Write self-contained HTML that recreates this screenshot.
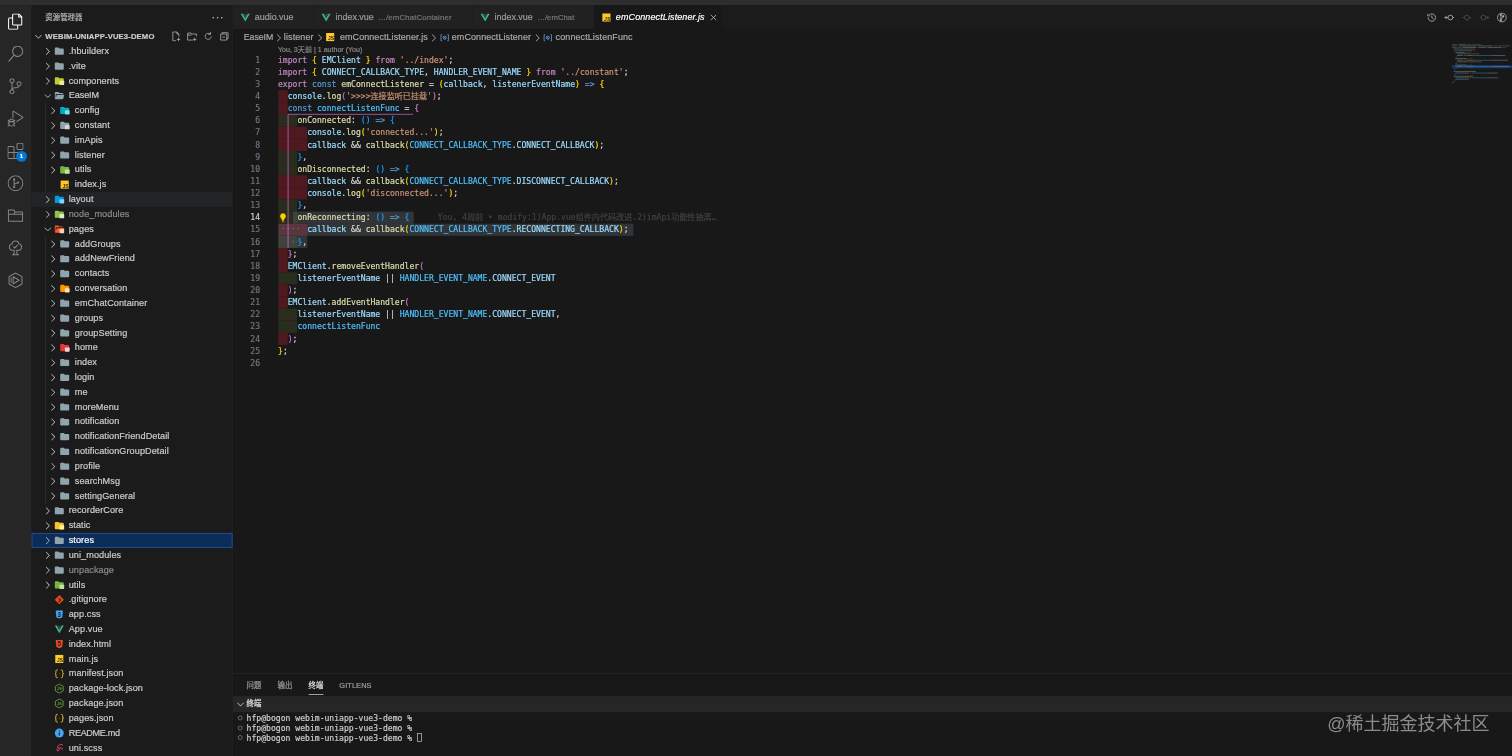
<!DOCTYPE html>
<html lang="zh-CN">
<head>
<meta charset="utf-8">
<title>emConnectListener.js — webim-uniapp-vue3-demo</title>
<style>
html,body{margin:0;padding:0;background:#181818;overflow:hidden;width:1512px;height:756px}
body{will-change:transform}
#root{position:absolute;left:0;top:0;width:2244px;height:1122px;transform:scale(0.673797);transform-origin:0 0;background:#181818;
 font-family:"Liberation Sans","Noto Sans CJK SC",sans-serif;font-size:13px;color:#cccccc;overflow:hidden;-webkit-text-stroke:0.28px currentColor}
#root *{box-sizing:border-box}
.titlebar{position:absolute;left:0;top:0;width:100%;height:8.2px;background:#2e2e2e}
.abar{position:absolute;left:0;top:8.2px;width:47.3px;bottom:0;background:#262626}
.abar .it{position:relative;width:48px;height:48px;display:flex;align-items:center;justify-content:center;padding-right:2.8px}
.abar svg{width:24px;height:24px;fill:#868686}
.abar .it.on svg{fill:#ffffff}
.abar .st{fill:none!important;stroke:#868686;stroke-width:1.5}
.badge{position:absolute;left:24px;top:24px;width:16px;height:16px;border-radius:8px;background:#0078d4;color:#fff;font-size:9px;font-weight:700;text-align:center;line-height:16px}
.side{position:absolute;left:47.3px;top:8.2px;width:298.7px;bottom:0;background:#1b1b1b;border-right:1px solid #242424}
.side .hd{height:35px;line-height:35px;padding-left:20px;font-size:11px;color:#bbbbbb;position:relative}
.side .hd .more{position:absolute;right:12px;top:2.6px;font-size:16px;letter-spacing:1px;color:#bbb;line-height:30px}
.pane{height:22.3px;line-height:22px;font-size:11.4px;font-weight:700;color:#cccccc;position:relative;padding-left:20px;letter-spacing:0.2px}
.pane .tw{position:absolute;left:2px;top:3px}
.pane .acts{position:absolute;right:4px;top:3px;display:flex;gap:8px}
.pane .acts svg{width:16px;height:16px;fill:none;stroke:#c5c5c5;stroke-width:1}
.row{height:22px;line-height:22px;display:flex;align-items:center;position:relative;white-space:nowrap;color:#cccccc}
.row.dim{color:#8c8c8c}
.row.sel{background:#0c2c5a;outline:1.3px solid #2b5ca8;outline-offset:-1px;color:#fff}
.row.hov{background:#232426}
.row.l2 .lb{margin-left:1px}
.row .tw{margin-left:-0.8px;margin-right:0.8px}
.tw{width:16px;height:16px;flex:0 0 16px;display:inline-block}
.ic{width:16px;height:16px;flex:0 0 16px;margin-right:6px;display:inline-block}
.lb{font-size:13.5px;letter-spacing:0.13px}
.gd{position:absolute;left:19.5px;top:0;width:1px;height:22px;background:#353535}
.ed{position:absolute;left:346px;top:8.2px;right:0;bottom:0;background:#181818}
.tabs{height:35px;background:#1b1b1b;display:flex;position:relative}
.tab{height:35px;display:flex;align-items:center;padding-left:10px;background:#212121;border-right:1px solid #1d1d1d;color:#9d9d9d;white-space:nowrap;font-size:13.2px;letter-spacing:0.1px}
.tab .ic{margin-right:6px}
.tab .ds{font-size:11.500px;color:#777;margin-left:6.5px;position:relative;top:0.5px}
.tab.on{background:#181818;color:#ffffff;font-style:italic}
.tab .x{width:16px;height:16px;margin-left:5.5px}
.tacts{position:absolute;right:7px;top:9.500px;display:flex;gap:10px}
.tacts svg{width:16px;height:16px;fill:none;stroke:#c5c5c5;stroke-width:1.1}
.tacts svg.off{stroke:#555}
.bc{height:22px;line-height:22px;position:relative;top:2.2px;color:#a9a9a9;font-size:13px;white-space:nowrap}
.ab{position:absolute;top:0}
.bc .sep{width:16px;height:16px;top:3px}
.bc .ic{margin:0;display:block}
.bc .sy{width:16px;height:16px;top:3px}
.lens{height:14.800px;line-height:16px;padding-left:66.600px;font-size:10.500px;color:#8a8a8a;white-space:nowrap}
.code{position:relative;font-family:"DejaVu Sans Mono","Liberation Mono","Noto Sans CJK SC",monospace;font-size:12px}
.ln{height:18px;line-height:18px;position:relative;white-space:pre}
.no{position:absolute;left:0;width:40px;text-align:right;color:#6e7681}
.no.cur{color:#cccccc}
.tx{position:absolute;left:66.600px;top:0;height:18px}
.src{position:relative}
.ir{position:absolute;left:0;top:0;height:18px}
.sl{position:absolute;top:0;height:18px;background:rgba(120,130,140,0.28)}
.ws{position:absolute;top:0;color:rgba(220,220,220,0.25)}
.blame{color:#404040;margin-left:42px;position:relative}
.bulb{position:absolute;left:66px;top:1px;width:16px;height:16px;z-index:5}
.k{color:#569cd6}.p{color:#c586c0}.v{color:#9cdcfe}.f{color:#dcdcaa}.c{color:#4fc1ff}.s{color:#ce9178}.d{color:#d4d4d4}
.b1{color:#ffd700}.b2{color:#da70d6}.b3{color:#179fff}
.bg-h{position:absolute;height:1px;background:#da70d6}
.bg-v{position:absolute;width:1px;background:#da70d6}
.mini{position:absolute;right:0;top:57px;width:89.300px;height:70px}
.panel{position:absolute;left:346px;right:0;top:999px;bottom:0;background:#181818;border-top:1px solid #2b2b2b}
.ptabs{height:33.4px;display:flex;align-items:center;padding-left:10px;letter-spacing:0.1px;font-size:11px;color:#9d9d9d}
.ptabs span{margin:0 13.7px 0 10px;height:35px;line-height:35px;top:0.8px;position:relative}
.ptabs span.on{color:#e7e7e7}
.ptabs span.on:after{content:"";position:absolute;left:0;right:0;bottom:4px;height:1px;background:#e7e7e7}
.phead{height:23.4px;line-height:23.4px;background:#262626;font-size:11px;font-weight:700;color:#cccccc;padding-left:20px;position:relative}
.phead .tw{position:absolute;left:3px;top:3.7px}
.term{font-family:"DejaVu Sans Mono","Liberation Mono","Noto Sans CJK SC",monospace;font-size:12px;color:#cccccc;padding:2px 0 0 20px;white-space:pre;position:relative}
.term div{height:14.800px;line-height:14.800px;position:relative}
.term i{position:absolute;left:-13px;top:3px;width:7px;height:7px;border:1px solid #8a8a8a;border-radius:50%}
.cursor{display:inline-block;width:7px;height:13px;border:1px solid #cccccc;vertical-align:-2px}
.wm{-webkit-text-stroke:0;position:absolute;right:33.5px;top:1054px;font-size:26.7px;color:#8c8c8c;font-family:"Liberation Sans","Noto Sans CJK SC",sans-serif;white-space:nowrap;line-height:40px}
</style>
</head>
<body>
<div id="root">
<div class="titlebar"></div>

<div class="abar">
 <div class="it on"><svg viewBox="0 0 24 24"><path d="M17.5 0h-9L7 1.5V6H2.5L1 7.5v15.070L2.500 24h12.070L16 22.570V18h4.700l1.300-1.430V4.500L17.500 0zm0 2.120l2.380 2.380H17.500V2.120zm-3 20.380h-12v-15H7v9.070L8.500 18h6v4.500zm6-6h-12v-15H16V6h4.500v10.500z"/></svg></div>
 <div class="it"><svg viewBox="0 0 24 24"><path d="M15.250 0a8.250 8.250 0 0 0-6.180 13.720L1 22.880l1.120 1 8.050-9.120A8.251 8.251 0 1 0 15.250.010V0zm0 15a6.750 6.750 0 1 1 0-13.500 6.750 6.750 0 0 1 0 13.500z"/></svg></div>
 <div class="it"><svg viewBox="0 0 24 24"><path d="M21.007 8.222A3.738 3.738 0 0 0 15.045 5.200a3.737 3.737 0 0 0 1.156 6.583 2.988 2.988 0 0 1-2.668 1.670h-2.990a4.456 4.456 0 0 0-2.989 1.165V7.400a3.737 3.737 0 1 0-1.494 0v9.117a3.776 3.776 0 1 0 1.816.099 2.990 2.990 0 0 1 2.668-1.667h2.990a4.484 4.484 0 0 0 4.223-3.039 3.736 3.736 0 0 0 3.250-3.687zM4.565 3.738a2.242 2.242 0 1 1 4.484 0 2.242 2.242 0 0 1-4.484 0zm4.484 16.441a2.242 2.242 0 1 1-4.484 0 2.242 2.242 0 0 1 4.484 0zm8.221-9.715a2.242 2.242 0 1 1 0-4.485 2.242 2.242 0 0 1 0 4.485z"/></svg></div>
 <div class="it"><svg viewBox="0 0 24 24"><path d="M10.940 13.500l-1.320 1.320a3.730 3.730 0 0 0-7.240 0L1.060 13.500 0 14.560l1.720 1.720-.220.220V18H0v1.500h1.500v.080c.077.489.214.966.410 1.420L0 22.940 1.060 24l1.650-1.650A4.308 4.308 0 0 0 6 24a4.310 4.310 0 0 0 3.290-1.650L10.940 24 12 22.940 10.090 21c.198-.464.336-.951.410-1.450v-.100H12V18h-1.500v-1.500l-.220-.220L12 14.560l-1.060-1.060zM6 13.500a2.250 2.250 0 0 1 2.250 2.250h-4.500A2.250 2.250 0 0 1 6 13.500zm3 6a3.330 3.330 0 0 1-3 3 3.330 3.330 0 0 1-3-3v-2.250h6v2.250zm14.760-9.900v1.260L13.500 17.370V15.600l8.500-5.370L9 2v9.460a5.070 5.070 0 0 0-1.500-.720V.630L8.640 0l15.120 9.600z"/></svg></div>
 <div class="it"><svg viewBox="0 0 24 24"><path d="M13.500 1.500L15 0h7.500L24 1.500V9l-1.500 1.500H15L13.500 9V1.500zm1.500 0V9h7.500V1.500H15zM0 15V6l1.500-1.500H9L10.500 6v7.500H18l1.500 1.500v7.500L18 24H1.500L0 22.500V15zm9-1.500V6H1.500v7.500H9zM9 15H1.500v7.500H9V15zm1.500 7.500H18V15h-7.500v7.500z"/></svg><span class="badge">1</span></div>
 <div class="it"><svg viewBox="0 0 24 24"><circle class="st" cx="12" cy="12" r="11"/><path class="st" d="M10 6.500v11M10 13.500l5.500-2.500"/><circle cx="10" cy="6.300" r="1.700"/><circle cx="10" cy="17.700" r="1.700"/><circle cx="15.800" cy="11" r="1.700"/></svg></div>
 <div class="it"><svg viewBox="0 0 24 24"><path class="st" stroke-linejoin="round" d="M1.500 20.500v-17h8l2 3h11v14z"/><path class="st" d="M1.500 10h21M11.500 6.500l-2 3.500"/></svg></div>
 <div class="it"><svg viewBox="0 0 24 24"><path class="st" d="M12 1.500c2.800 0 4.700 1.900 4.900 4.200 2.500.400 4.100 2.300 4.100 4.800 0 2.900-2.300 5-5.500 5h-1.500v4.500l2 2h-8l2-2v-4.500H8.500c-3.200 0-5.500-2.100-5.500-5 0-2.500 1.600-4.400 4.100-4.800.200-2.300 2.100-4.200 4.900-4.200z"/><path class="st" d="M8.500 9.500l2.500 2.500 4.500-4.500"/></svg></div>
 <div class="it"><svg viewBox="0 0 24 24"><path class="st" stroke-linejoin="round" d="M12 1.200l9.600 5.400v10.800L12 22.800l-9.600-5.400V6.600z"/><path class="st" stroke-linejoin="round" d="M8.500 6.800l9 5.200-9 5.200z"/><path class="st" d="M5.500 8.300v7.400"/></svg></div>
</div>

<div class="side">
 <div class="hd">资源管理器<span class="more">···</span></div>
 <div class="pane"><svg class="tw" viewBox="0 0 16 16"><path d="M7.976 10.072l4.357-4.357.62.618L8.284 11h-.618L3 6.333l.619-.618z" fill="#c5c5c5"/></svg>WEBIM-UNIAPP-VUE3-DEMO
  <div class="acts">
   <svg viewBox="0 0 16 16"><path d="M9.500 1.500h-6v13h5M9.500 1.500l3 3v4M9.500 1.500v3h3M12 10v5M9.500 12.500h5"/></svg>
   <svg viewBox="0 0 16 16"><path d="M14.500 8V4.500h-7l-1-1.500h-5v10.500h8M12 10v5M9.500 12.500h5M1.500 6h6"/></svg>
   <svg viewBox="0 0 16 16"><path d="M12.500 8a4.500 4.500 0 1 1-1.500-3.400M11.500 1.500v3.500h-3.500"/></svg>
   <svg viewBox="0 0 16 16"><path d="M4.500 4.500v-2h9v9h-2M2.500 4.500h9v9h-9zM5 9h4"/></svg>
  </div>
 </div>
<div class="row" style="padding-left:16.7px"><svg class="tw" viewBox="0 0 16 16"><path d="M5.700 13.700L5 13l4.600-4.600L5 3.700l.700-.700 5 5v.700z" fill="#c5c5c5"/></svg><svg class="ic" viewBox="0 0 24 24"><path d="M10 4H4c-1.11 0-2 .89-2 2v12c0 1.1.9 2 2 2h16c1.1 0 2-.9 2-2V8c0-1.11-.9-2-2-2h-8l-2-2z" fill="#90a4ae"/></svg><span class="lb">.hbuilderx</span></div>
<div class="row" style="padding-left:16.7px"><svg class="tw" viewBox="0 0 16 16"><path d="M5.700 13.700L5 13l4.600-4.600L5 3.700l.700-.700 5 5v.700z" fill="#c5c5c5"/></svg><svg class="ic" viewBox="0 0 24 24"><path d="M10 4H4c-1.11 0-2 .89-2 2v12c0 1.1.9 2 2 2h16c1.1 0 2-.9 2-2V8c0-1.11-.9-2-2-2h-8l-2-2z" fill="#90a4ae"/></svg><span class="lb">.vite</span></div>
<div class="row" style="padding-left:16.7px"><svg class="tw" viewBox="0 0 16 16"><path d="M5.700 13.700L5 13l4.600-4.600L5 3.700l.700-.700 5 5v.700z" fill="#c5c5c5"/></svg><svg class="ic" viewBox="0 0 24 24"><path d="M10 4H4c-1.11 0-2 .89-2 2v12c0 1.1.9 2 2 2h16c1.1 0 2-.9 2-2V8c0-1.11-.9-2-2-2h-8l-2-2z" fill="#c0ca33"/><rect x="12.5" y="11.5" width="10.5" height="9.5" rx="1.5" fill="#e6ee9c"/></svg><span class="lb">components</span></div>
<div class="row" style="padding-left:16.7px"><svg class="tw" viewBox="0 0 16 16"><path d="M7.976 10.072l4.357-4.357.62.618L8.284 11h-.618L3 6.333l.619-.618z" fill="#c5c5c5"/></svg><svg class="ic" viewBox="0 0 24 24"><path d="M19 20H4c-1.11 0-2-.9-2-2V6c0-1.11.89-2 2-2h6l2 2h7a2 2 0 0 1 2 2H4v10l2.14-8h17.07l-2.28 8.5c-.23.87-1.01 1.5-1.93 1.5z" fill="#90a4ae"/></svg><span class="lb" style="letter-spacing:-0.128px">EaseIM</span></div>
<div class="row l2" style="padding-left:24.7px"><i class="gd"></i><svg class="tw" viewBox="0 0 16 16"><path d="M5.700 13.700L5 13l4.600-4.600L5 3.700l.700-.700 5 5v.700z" fill="#c5c5c5"/></svg><svg class="ic" viewBox="0 0 24 24"><path d="M10 4H4c-1.11 0-2 .89-2 2v12c0 1.1.9 2 2 2h16c1.1 0 2-.9 2-2V8c0-1.11-.9-2-2-2h-8l-2-2z" fill="#00acc1"/><rect x="12.5" y="11.5" width="10.5" height="9.5" rx="1.5" fill="#80deea"/></svg><span class="lb">config</span></div>
<div class="row l2" style="padding-left:24.7px"><i class="gd"></i><svg class="tw" viewBox="0 0 16 16"><path d="M5.700 13.700L5 13l4.600-4.600L5 3.700l.700-.700 5 5v.700z" fill="#c5c5c5"/></svg><svg class="ic" viewBox="0 0 24 24"><path d="M10 4H4c-1.11 0-2 .89-2 2v12c0 1.1.9 2 2 2h16c1.1 0 2-.9 2-2V8c0-1.11-.9-2-2-2h-8l-2-2z" fill="#90a4ae"/><rect x="12.5" y="11.5" width="10.5" height="9.5" rx="1.5" fill="#cfd8dc"/></svg><span class="lb">constant</span></div>
<div class="row l2" style="padding-left:24.7px"><i class="gd"></i><svg class="tw" viewBox="0 0 16 16"><path d="M5.700 13.700L5 13l4.600-4.600L5 3.700l.700-.700 5 5v.700z" fill="#c5c5c5"/></svg><svg class="ic" viewBox="0 0 24 24"><path d="M10 4H4c-1.11 0-2 .89-2 2v12c0 1.1.9 2 2 2h16c1.1 0 2-.9 2-2V8c0-1.11-.9-2-2-2h-8l-2-2z" fill="#90a4ae"/></svg><span class="lb">imApis</span></div>
<div class="row l2" style="padding-left:24.7px"><i class="gd"></i><svg class="tw" viewBox="0 0 16 16"><path d="M5.700 13.700L5 13l4.600-4.600L5 3.700l.700-.700 5 5v.700z" fill="#c5c5c5"/></svg><svg class="ic" viewBox="0 0 24 24"><path d="M10 4H4c-1.11 0-2 .89-2 2v12c0 1.1.9 2 2 2h16c1.1 0 2-.9 2-2V8c0-1.11-.9-2-2-2h-8l-2-2z" fill="#90a4ae"/></svg><span class="lb">listener</span></div>
<div class="row l2" style="padding-left:24.7px"><i class="gd"></i><svg class="tw" viewBox="0 0 16 16"><path d="M5.700 13.700L5 13l4.600-4.600L5 3.700l.700-.700 5 5v.700z" fill="#c5c5c5"/></svg><svg class="ic" viewBox="0 0 24 24"><path d="M10 4H4c-1.11 0-2 .89-2 2v12c0 1.1.9 2 2 2h16c1.1 0 2-.9 2-2V8c0-1.11-.9-2-2-2h-8l-2-2z" fill="#7cb342"/><rect x="12.5" y="11.5" width="10.5" height="9.5" rx="1.5" fill="#c5e1a5"/></svg><span class="lb">utils</span></div>
<div class="row l2" style="padding-left:24.7px"><i class="gd"></i><span class="tw"></span><svg class="ic" viewBox="0 0 24 24"><rect x="3" y="3" width="18" height="18" fill="#ffca28"/><text x="20.5" y="19.5" font-family="Liberation Sans,sans-serif" font-weight="700" font-size="11" text-anchor="end" fill="#2e2a10" stroke="none">JS</text></svg><span class="lb">index.js</span></div>
<div class="row hov" style="padding-left:16.7px"><svg class="tw" viewBox="0 0 16 16"><path d="M5.700 13.700L5 13l4.600-4.600L5 3.700l.700-.700 5 5v.700z" fill="#c5c5c5"/></svg><svg class="ic" viewBox="0 0 24 24"><path d="M10 4H4c-1.11 0-2 .89-2 2v12c0 1.1.9 2 2 2h16c1.1 0 2-.9 2-2V8c0-1.11-.9-2-2-2h-8l-2-2z" fill="#039be5"/><rect x="12.5" y="11.5" width="10.5" height="9.5" rx="1.5" fill="#81d4fa"/></svg><span class="lb">layout</span></div>
<div class="row dim" style="padding-left:16.7px"><svg class="tw" viewBox="0 0 16 16"><path d="M5.700 13.700L5 13l4.600-4.600L5 3.700l.700-.700 5 5v.700z" fill="#c5c5c5"/></svg><svg class="ic" viewBox="0 0 24 24"><path d="M10 4H4c-1.11 0-2 .89-2 2v12c0 1.1.9 2 2 2h16c1.1 0 2-.9 2-2V8c0-1.11-.9-2-2-2h-8l-2-2z" fill="#8bc34a"/><rect x="12.5" y="11.5" width="10.5" height="9.5" rx="1.5" fill="#dcedc8"/></svg><span class="lb">node_modules</span></div>
<div class="row" style="padding-left:16.7px"><svg class="tw" viewBox="0 0 16 16"><path d="M7.976 10.072l4.357-4.357.62.618L8.284 11h-.618L3 6.333l.619-.618z" fill="#c5c5c5"/></svg><svg class="ic" viewBox="0 0 24 24"><path d="M19 20H4c-1.11 0-2-.9-2-2V6c0-1.11.89-2 2-2h6l2 2h7a2 2 0 0 1 2 2H4v10l2.14-8h17.07l-2.28 8.5c-.23.87-1.01 1.5-1.93 1.5z" fill="#ff5722"/><rect x="12.5" y="11.5" width="10.5" height="9.5" rx="1.5" fill="#ffccbc"/></svg><span class="lb">pages</span></div>
<div class="row l2" style="padding-left:24.7px"><i class="gd"></i><svg class="tw" viewBox="0 0 16 16"><path d="M5.700 13.700L5 13l4.600-4.600L5 3.700l.700-.700 5 5v.700z" fill="#c5c5c5"/></svg><svg class="ic" viewBox="0 0 24 24"><path d="M10 4H4c-1.11 0-2 .89-2 2v12c0 1.1.9 2 2 2h16c1.1 0 2-.9 2-2V8c0-1.11-.9-2-2-2h-8l-2-2z" fill="#90a4ae"/></svg><span class="lb">addGroups</span></div>
<div class="row l2" style="padding-left:24.7px"><i class="gd"></i><svg class="tw" viewBox="0 0 16 16"><path d="M5.700 13.700L5 13l4.600-4.600L5 3.700l.700-.700 5 5v.700z" fill="#c5c5c5"/></svg><svg class="ic" viewBox="0 0 24 24"><path d="M10 4H4c-1.11 0-2 .89-2 2v12c0 1.1.9 2 2 2h16c1.1 0 2-.9 2-2V8c0-1.11-.9-2-2-2h-8l-2-2z" fill="#90a4ae"/></svg><span class="lb">addNewFriend</span></div>
<div class="row l2" style="padding-left:24.7px"><i class="gd"></i><svg class="tw" viewBox="0 0 16 16"><path d="M5.700 13.700L5 13l4.600-4.600L5 3.700l.700-.700 5 5v.700z" fill="#c5c5c5"/></svg><svg class="ic" viewBox="0 0 24 24"><path d="M10 4H4c-1.11 0-2 .89-2 2v12c0 1.1.9 2 2 2h16c1.1 0 2-.9 2-2V8c0-1.11-.9-2-2-2h-8l-2-2z" fill="#90a4ae"/></svg><span class="lb">contacts</span></div>
<div class="row l2" style="padding-left:24.7px"><i class="gd"></i><svg class="tw" viewBox="0 0 16 16"><path d="M5.700 13.700L5 13l4.600-4.600L5 3.700l.700-.700 5 5v.700z" fill="#c5c5c5"/></svg><svg class="ic" viewBox="0 0 24 24"><path d="M10 4H4c-1.11 0-2 .89-2 2v12c0 1.1.9 2 2 2h16c1.1 0 2-.9 2-2V8c0-1.11-.9-2-2-2h-8l-2-2z" fill="#ff9800"/><rect x="12.5" y="11.5" width="10.5" height="9.5" rx="1.5" fill="#ffe0b2"/></svg><span class="lb">conversation</span></div>
<div class="row l2" style="padding-left:24.7px"><i class="gd"></i><svg class="tw" viewBox="0 0 16 16"><path d="M5.700 13.700L5 13l4.600-4.600L5 3.700l.700-.700 5 5v.700z" fill="#c5c5c5"/></svg><svg class="ic" viewBox="0 0 24 24"><path d="M10 4H4c-1.11 0-2 .89-2 2v12c0 1.1.9 2 2 2h16c1.1 0 2-.9 2-2V8c0-1.11-.9-2-2-2h-8l-2-2z" fill="#90a4ae"/></svg><span class="lb">emChatContainer</span></div>
<div class="row l2" style="padding-left:24.7px"><i class="gd"></i><svg class="tw" viewBox="0 0 16 16"><path d="M5.700 13.700L5 13l4.600-4.600L5 3.700l.700-.700 5 5v.700z" fill="#c5c5c5"/></svg><svg class="ic" viewBox="0 0 24 24"><path d="M10 4H4c-1.11 0-2 .89-2 2v12c0 1.1.9 2 2 2h16c1.1 0 2-.9 2-2V8c0-1.11-.9-2-2-2h-8l-2-2z" fill="#90a4ae"/></svg><span class="lb">groups</span></div>
<div class="row l2" style="padding-left:24.7px"><i class="gd"></i><svg class="tw" viewBox="0 0 16 16"><path d="M5.700 13.700L5 13l4.600-4.600L5 3.700l.700-.700 5 5v.700z" fill="#c5c5c5"/></svg><svg class="ic" viewBox="0 0 24 24"><path d="M10 4H4c-1.11 0-2 .89-2 2v12c0 1.1.9 2 2 2h16c1.1 0 2-.9 2-2V8c0-1.11-.9-2-2-2h-8l-2-2z" fill="#90a4ae"/></svg><span class="lb">groupSetting</span></div>
<div class="row l2" style="padding-left:24.7px"><i class="gd"></i><svg class="tw" viewBox="0 0 16 16"><path d="M5.700 13.700L5 13l4.600-4.600L5 3.700l.700-.700 5 5v.700z" fill="#c5c5c5"/></svg><svg class="ic" viewBox="0 0 24 24"><path d="M10 4H4c-1.11 0-2 .89-2 2v12c0 1.1.9 2 2 2h16c1.1 0 2-.9 2-2V8c0-1.11-.9-2-2-2h-8l-2-2z" fill="#e53935"/><rect x="12.5" y="11.5" width="10.5" height="9.5" rx="1.5" fill="#ffcdd2"/></svg><span class="lb">home</span></div>
<div class="row l2" style="padding-left:24.7px"><i class="gd"></i><svg class="tw" viewBox="0 0 16 16"><path d="M5.700 13.700L5 13l4.600-4.600L5 3.700l.700-.700 5 5v.700z" fill="#c5c5c5"/></svg><svg class="ic" viewBox="0 0 24 24"><path d="M10 4H4c-1.11 0-2 .89-2 2v12c0 1.1.9 2 2 2h16c1.1 0 2-.9 2-2V8c0-1.11-.9-2-2-2h-8l-2-2z" fill="#90a4ae"/></svg><span class="lb">index</span></div>
<div class="row l2" style="padding-left:24.7px"><i class="gd"></i><svg class="tw" viewBox="0 0 16 16"><path d="M5.700 13.700L5 13l4.600-4.600L5 3.700l.700-.700 5 5v.700z" fill="#c5c5c5"/></svg><svg class="ic" viewBox="0 0 24 24"><path d="M10 4H4c-1.11 0-2 .89-2 2v12c0 1.1.9 2 2 2h16c1.1 0 2-.9 2-2V8c0-1.11-.9-2-2-2h-8l-2-2z" fill="#90a4ae"/></svg><span class="lb">login</span></div>
<div class="row l2" style="padding-left:24.7px"><i class="gd"></i><svg class="tw" viewBox="0 0 16 16"><path d="M5.700 13.700L5 13l4.600-4.600L5 3.700l.700-.700 5 5v.700z" fill="#c5c5c5"/></svg><svg class="ic" viewBox="0 0 24 24"><path d="M10 4H4c-1.11 0-2 .89-2 2v12c0 1.1.9 2 2 2h16c1.1 0 2-.9 2-2V8c0-1.11-.9-2-2-2h-8l-2-2z" fill="#90a4ae"/></svg><span class="lb">me</span></div>
<div class="row l2" style="padding-left:24.7px"><i class="gd"></i><svg class="tw" viewBox="0 0 16 16"><path d="M5.700 13.700L5 13l4.600-4.600L5 3.700l.700-.700 5 5v.700z" fill="#c5c5c5"/></svg><svg class="ic" viewBox="0 0 24 24"><path d="M10 4H4c-1.11 0-2 .89-2 2v12c0 1.1.9 2 2 2h16c1.1 0 2-.9 2-2V8c0-1.11-.9-2-2-2h-8l-2-2z" fill="#90a4ae"/></svg><span class="lb">moreMenu</span></div>
<div class="row l2" style="padding-left:24.7px"><i class="gd"></i><svg class="tw" viewBox="0 0 16 16"><path d="M5.700 13.700L5 13l4.600-4.600L5 3.700l.700-.700 5 5v.700z" fill="#c5c5c5"/></svg><svg class="ic" viewBox="0 0 24 24"><path d="M10 4H4c-1.11 0-2 .89-2 2v12c0 1.1.9 2 2 2h16c1.1 0 2-.9 2-2V8c0-1.11-.9-2-2-2h-8l-2-2z" fill="#90a4ae"/></svg><span class="lb">notification</span></div>
<div class="row l2" style="padding-left:24.7px"><i class="gd"></i><svg class="tw" viewBox="0 0 16 16"><path d="M5.700 13.700L5 13l4.600-4.600L5 3.700l.700-.700 5 5v.700z" fill="#c5c5c5"/></svg><svg class="ic" viewBox="0 0 24 24"><path d="M10 4H4c-1.11 0-2 .89-2 2v12c0 1.1.9 2 2 2h16c1.1 0 2-.9 2-2V8c0-1.11-.9-2-2-2h-8l-2-2z" fill="#90a4ae"/></svg><span class="lb">notificationFriendDetail</span></div>
<div class="row l2" style="padding-left:24.7px"><i class="gd"></i><svg class="tw" viewBox="0 0 16 16"><path d="M5.700 13.700L5 13l4.600-4.600L5 3.700l.700-.700 5 5v.700z" fill="#c5c5c5"/></svg><svg class="ic" viewBox="0 0 24 24"><path d="M10 4H4c-1.11 0-2 .89-2 2v12c0 1.1.9 2 2 2h16c1.1 0 2-.9 2-2V8c0-1.11-.9-2-2-2h-8l-2-2z" fill="#90a4ae"/></svg><span class="lb">notificationGroupDetail</span></div>
<div class="row l2" style="padding-left:24.7px"><i class="gd"></i><svg class="tw" viewBox="0 0 16 16"><path d="M5.700 13.700L5 13l4.600-4.600L5 3.700l.700-.700 5 5v.700z" fill="#c5c5c5"/></svg><svg class="ic" viewBox="0 0 24 24"><path d="M10 4H4c-1.11 0-2 .89-2 2v12c0 1.1.9 2 2 2h16c1.1 0 2-.9 2-2V8c0-1.11-.9-2-2-2h-8l-2-2z" fill="#90a4ae"/></svg><span class="lb">profile</span></div>
<div class="row l2" style="padding-left:24.7px"><i class="gd"></i><svg class="tw" viewBox="0 0 16 16"><path d="M5.700 13.700L5 13l4.600-4.600L5 3.700l.700-.700 5 5v.700z" fill="#c5c5c5"/></svg><svg class="ic" viewBox="0 0 24 24"><path d="M10 4H4c-1.11 0-2 .89-2 2v12c0 1.1.9 2 2 2h16c1.1 0 2-.9 2-2V8c0-1.11-.9-2-2-2h-8l-2-2z" fill="#90a4ae"/></svg><span class="lb">searchMsg</span></div>
<div class="row l2" style="padding-left:24.7px"><i class="gd"></i><svg class="tw" viewBox="0 0 16 16"><path d="M5.700 13.700L5 13l4.600-4.600L5 3.700l.700-.700 5 5v.700z" fill="#c5c5c5"/></svg><svg class="ic" viewBox="0 0 24 24"><path d="M10 4H4c-1.11 0-2 .89-2 2v12c0 1.1.9 2 2 2h16c1.1 0 2-.9 2-2V8c0-1.11-.9-2-2-2h-8l-2-2z" fill="#90a4ae"/></svg><span class="lb">settingGeneral</span></div>
<div class="row" style="padding-left:16.7px"><svg class="tw" viewBox="0 0 16 16"><path d="M5.700 13.700L5 13l4.600-4.600L5 3.700l.700-.700 5 5v.700z" fill="#c5c5c5"/></svg><svg class="ic" viewBox="0 0 24 24"><path d="M10 4H4c-1.11 0-2 .89-2 2v12c0 1.1.9 2 2 2h16c1.1 0 2-.9 2-2V8c0-1.11-.9-2-2-2h-8l-2-2z" fill="#90a4ae"/></svg><span class="lb">recorderCore</span></div>
<div class="row" style="padding-left:16.7px"><svg class="tw" viewBox="0 0 16 16"><path d="M5.700 13.700L5 13l4.600-4.600L5 3.700l.700-.700 5 5v.700z" fill="#c5c5c5"/></svg><svg class="ic" viewBox="0 0 24 24"><path d="M10 4H4c-1.11 0-2 .89-2 2v12c0 1.1.9 2 2 2h16c1.1 0 2-.9 2-2V8c0-1.11-.9-2-2-2h-8l-2-2z" fill="#fbc02d"/><rect x="12.5" y="11.5" width="10.5" height="9.5" rx="1.5" fill="#fff59d"/></svg><span class="lb">static</span></div>
<div class="row sel" style="padding-left:16.7px"><svg class="tw" viewBox="0 0 16 16"><path d="M5.700 13.700L5 13l4.600-4.600L5 3.700l.700-.700 5 5v.700z" fill="#c5c5c5"/></svg><svg class="ic" viewBox="0 0 24 24"><path d="M10 4H4c-1.11 0-2 .89-2 2v12c0 1.1.9 2 2 2h16c1.1 0 2-.9 2-2V8c0-1.11-.9-2-2-2h-8l-2-2z" fill="#90a4ae"/></svg><span class="lb">stores</span></div>
<div class="row" style="padding-left:16.7px"><svg class="tw" viewBox="0 0 16 16"><path d="M5.700 13.700L5 13l4.600-4.600L5 3.700l.700-.700 5 5v.700z" fill="#c5c5c5"/></svg><svg class="ic" viewBox="0 0 24 24"><path d="M10 4H4c-1.11 0-2 .89-2 2v12c0 1.1.9 2 2 2h16c1.1 0 2-.9 2-2V8c0-1.11-.9-2-2-2h-8l-2-2z" fill="#90a4ae"/></svg><span class="lb">uni_modules</span></div>
<div class="row dim" style="padding-left:16.7px"><svg class="tw" viewBox="0 0 16 16"><path d="M5.700 13.700L5 13l4.600-4.600L5 3.700l.700-.700 5 5v.700z" fill="#c5c5c5"/></svg><svg class="ic" viewBox="0 0 24 24"><path d="M10 4H4c-1.11 0-2 .89-2 2v12c0 1.1.9 2 2 2h16c1.1 0 2-.9 2-2V8c0-1.11-.9-2-2-2h-8l-2-2z" fill="#90a4ae"/></svg><span class="lb">unpackage</span></div>
<div class="row" style="padding-left:16.7px"><svg class="tw" viewBox="0 0 16 16"><path d="M5.700 13.700L5 13l4.600-4.600L5 3.700l.700-.700 5 5v.700z" fill="#c5c5c5"/></svg><svg class="ic" viewBox="0 0 24 24"><path d="M10 4H4c-1.11 0-2 .89-2 2v12c0 1.1.9 2 2 2h16c1.1 0 2-.9 2-2V8c0-1.11-.9-2-2-2h-8l-2-2z" fill="#7cb342"/><rect x="12.5" y="11.5" width="10.5" height="9.5" rx="1.5" fill="#c5e1a5"/></svg><span class="lb">utils</span></div>
<div class="row" style="padding-left:16.7px"><span class="tw"></span><svg class="ic" viewBox="0 0 24 24"><path d="M12 1.8L22.2 12 12 22.2 1.8 12z" fill="#e64a19"/><path d="M9.5 7.5l5 5M12 10v6.5" stroke="#2a1a14" stroke-width="1.6" fill="none"/><circle cx="12" cy="16.5" r="1.5" fill="#2a1a14"/><circle cx="14.7" cy="12.7" r="1.5" fill="#2a1a14"/></svg><span class="lb">.gitignore</span></div>
<div class="row" style="padding-left:16.7px"><span class="tw"></span><svg class="ic" viewBox="0 0 24 24"><path d="M4 3h16l-1.500 15.500L12 21l-6.500-2.500z" fill="#42a5f5"/><text x="12" y="17.200" font-family="Liberation Sans,sans-serif" font-weight="700" font-size="14" text-anchor="middle" fill="#1b1b1b" stroke="none">3</text></svg><span class="lb">app.css</span></div>
<div class="row" style="padding-left:16.7px"><span class="tw"></span><svg class="ic" viewBox="0 0 24 24"><path d="M2 3.5h4.3L12 13.4l5.7-9.9H22L12 21z" fill="#41b883"/><path d="M6.3 3.5h3.6L12 7.2l2.1-3.7h3.6L12 13.4z" fill="#35495e"/></svg><span class="lb">App.vue</span></div>
<div class="row" style="padding-left:16.7px"><span class="tw"></span><svg class="ic" viewBox="0 0 24 24"><path d="M4 3h16l-1.500 15.500L12 21l-6.500-2.500z" fill="#e44d26"/><text x="12" y="17.200" font-family="Liberation Sans,sans-serif" font-weight="700" font-size="14" text-anchor="middle" fill="#2a1712" stroke="none">5</text></svg><span class="lb">index.html</span></div>
<div class="row" style="padding-left:16.7px"><span class="tw"></span><svg class="ic" viewBox="0 0 24 24"><rect x="3" y="3" width="18" height="18" fill="#ffca28"/><text x="20.5" y="19.5" font-family="Liberation Sans,sans-serif" font-weight="700" font-size="11" text-anchor="end" fill="#2e2a10" stroke="none">JS</text></svg><span class="lb">main.js</span></div>
<div class="row" style="padding-left:16.7px"><span class="tw"></span><svg class="ic" viewBox="0 0 24 24"><path d="M8.5 3.5h-1.5a2.5 2.5 0 0 0-2.5 2.5v3.5a2 2 0 0 1-2 2 2 2 0 0 1 2 2v4.5a2.500 2.500 0 0 0 2.500 2.500h1.500" stroke="#f9c32b" stroke-width="2" fill="none"/><path d="M15.5 3.5h1.5a2.5 2.5 0 0 1 2.5 2.5v3.500a2 2 0 0 0 2 2 2 2 0 0 0-2 2v4.500a2.500 2.500 0 0 1-2.500 2.500h-1.500" stroke="#f9c32b" stroke-width="2" fill="none"/><circle cx="12" cy="12" r="0.9" fill="#f9c32b"/></svg><span class="lb">manifest.json</span></div>
<div class="row" style="padding-left:16.7px"><span class="tw"></span><svg class="ic" viewBox="0 0 24 24"><path d="M12 2l8.700 5v10L12 22l-8.700-5V7z" fill="none" stroke="#6a9f3c" stroke-width="2"/><text x="12.200" y="15.400" font-family="Liberation Sans,sans-serif" font-weight="700" font-size="8.500" text-anchor="middle" fill="#6a9f3c" stroke="none">JS</text></svg><span class="lb">package-lock.json</span></div>
<div class="row" style="padding-left:16.7px"><span class="tw"></span><svg class="ic" viewBox="0 0 24 24"><path d="M12 2l8.700 5v10L12 22l-8.700-5V7z" fill="none" stroke="#6a9f3c" stroke-width="2"/><text x="12.200" y="15.400" font-family="Liberation Sans,sans-serif" font-weight="700" font-size="8.500" text-anchor="middle" fill="#6a9f3c" stroke="none">JS</text></svg><span class="lb">package.json</span></div>
<div class="row" style="padding-left:16.7px"><span class="tw"></span><svg class="ic" viewBox="0 0 24 24"><path d="M8.5 3.5h-1.5a2.5 2.5 0 0 0-2.5 2.5v3.5a2 2 0 0 1-2 2 2 2 0 0 1 2 2v4.5a2.500 2.500 0 0 0 2.500 2.500h1.500" stroke="#f9c32b" stroke-width="2" fill="none"/><path d="M15.5 3.5h1.5a2.5 2.5 0 0 1 2.5 2.5v3.500a2 2 0 0 0 2 2 2 2 0 0 0-2 2v4.500a2.500 2.500 0 0 1-2.500 2.500h-1.500" stroke="#f9c32b" stroke-width="2" fill="none"/><circle cx="12" cy="12" r="0.9" fill="#f9c32b"/></svg><span class="lb">pages.json</span></div>
<div class="row" style="padding-left:16.7px"><span class="tw"></span><svg class="ic" viewBox="0 0 24 24"><circle cx="12" cy="12" r="10" fill="#42a5f5"/><rect x="10.800" y="10.500" width="2.400" height="7" fill="#15222e"/><circle cx="12" cy="7.300" r="1.400" fill="#15222e"/></svg><span class="lb" style="letter-spacing:-0.529px">README.md</span></div>
<div class="row" style="padding-left:16.7px"><span class="tw"></span><svg class="ic" viewBox="0 0 24 24"><path d="M19.500 5.500c-1.500-2.500-7-1.500-10 1.500-2.500 2.500-1.500 4.500 1 6 2 1.300 2.500 3 1 4.500s-4.500 1.500-5-.500c-.500-2.500 3-4.500 6.500-5 4-.500 6.500 1 6 3" stroke="#ec407a" stroke-width="2.200" fill="none" stroke-linecap="round"/></svg><span class="lb">uni.scss</span></div>
</div>

<div class="ed">
 <div class="tabs">
  <div class="tab" style="width:120px"><svg class="ic" viewBox="0 0 24 24"><path d="M2 3.5h4.3L12 13.4l5.7-9.9H22L12 21z" fill="#41b883"/><path d="M6.3 3.5h3.6L12 7.2l2.1-3.7h3.6L12 13.4z" fill="#35495e"/></svg><span style="font-size:13.3px;letter-spacing:0.002px">audio.vue</span></div><div class="tab" style="width:236px"><svg class="ic" viewBox="0 0 24 24"><path d="M2 3.5h4.3L12 13.4l5.7-9.9H22L12 21z" fill="#41b883"/><path d="M6.3 3.5h3.6L12 7.2l2.1-3.7h3.6L12 13.4z" fill="#35495e"/></svg><span style="font-size:13.3px;letter-spacing:-0.026px">index.vue</span><span class="ds" style="letter-spacing:0.257px">…/emChatContainer</span></div><div class="tab" style="width:180px"><svg class="ic" viewBox="0 0 24 24"><path d="M2 3.5h4.3L12 13.4l5.7-9.9H22L12 21z" fill="#41b883"/><path d="M6.3 3.5h3.6L12 7.2l2.1-3.7h3.6L12 13.4z" fill="#35495e"/></svg><span style="font-size:13.3px;letter-spacing:-0.026px">index.vue</span><span class="ds" style="letter-spacing:0.030px">…/emChat</span></div><div class="tab on" style="width:190px"><svg class="ic" viewBox="0 0 24 24"><rect x="3" y="3" width="18" height="18" fill="#ffca28"/><text x="20.5" y="19.5" font-family="Liberation Sans,sans-serif" font-weight="700" font-size="11" text-anchor="end" fill="#2e2a10" stroke="none">JS</text></svg><span style="font-size:13.3px;letter-spacing:0.188px">emConnectListener.js</span><svg class="x" viewBox="0 0 16 16"><path d="M4 4l8 8M12 4l-8 8" stroke="#cccccc" stroke-width="1.1" fill="none"/></svg></div>
  <div class="tacts">
   <svg viewBox="0 0 16 16"><path d="M2.500 8a5.500 5.500 0 1 0 1.800-4M2 2.500v3h3M8 5v3.500l2.500 1.500"/></svg>
   <svg viewBox="0 0 16 16"><circle cx="9.500" cy="8" r="3.500"/><path d="M6 8H1.500M4 5.500L1.500 8 4 10.500M13 8h2"/></svg>
   <svg class="off" viewBox="0 0 16 16"><circle cx="8" cy="8" r="3.500"/><path d="M1.500 8h3M11.500 8h3"/></svg>
   <svg class="off" viewBox="0 0 16 16"><circle cx="6.500" cy="8" r="3.500"/><path d="M10 8h4.500M12 5.500L14.500 8 12 10.500M1 8h2"/></svg>
   <svg viewBox="0 0 16 16"><circle cx="8" cy="8" r="6.500"/><path d="M6.500 4v8M6.500 9c2.500 0 3.500-1 3.500-2.500" /><circle cx="6.500" cy="4" r="1" fill="#c5c5c5"/><circle cx="6.500" cy="12" r="1" fill="#c5c5c5"/><circle cx="10" cy="6" r="1" fill="#c5c5c5"/></svg>
  </div>
 </div>
 <div class="bc"><span class="ab" style="left:15.80px;font-size:13.00px;letter-spacing:-0.062px;">EaseIM</span><svg class="ab sep" style="left:60.40px" viewBox="0 0 16 16"><path d="M5.700 13.700L5 13l4.600-4.600L5 3.700l.700-.700 5 5v.700z" fill="#a9a9a9"/></svg><span class="ab" style="left:75.20px;font-size:13.30px;letter-spacing:0.191px;">listener</span><svg class="ab sep" style="left:120.50px" viewBox="0 0 16 16"><path d="M5.700 13.700L5 13l4.600-4.600L5 3.700l.700-.700 5 5v.700z" fill="#a9a9a9"/></svg><span class="ab" style="left:136.4px;top:2px;width:16px;height:16px"><svg class="ic" viewBox="0 0 24 24"><rect x="3" y="3" width="18" height="18" fill="#ffca28"/><text x="20.5" y="19.5" font-family="Liberation Sans,sans-serif" font-weight="700" font-size="11" text-anchor="end" fill="#2e2a10" stroke="none">JS</text></svg></span><span class="ab" style="left:158.60px;font-size:13.30px;letter-spacing:0.120px;">emConnectListener.js</span><svg class="ab sep" style="left:290.10px" viewBox="0 0 16 16"><path d="M5.700 13.700L5 13l4.600-4.600L5 3.700l.700-.700 5 5v.700z" fill="#a9a9a9"/></svg><svg class="ab sy" style="left:305.50px" viewBox="0 0 16 16"><path d="M4 3.500H2.500v9H4M12 3.500h1.500v9H12" stroke="#75beff" fill="none"/><circle cx="8" cy="8" r="2.300" stroke="#75beff" fill="none"/><path d="M6.300 6.300l3.400 3.400" stroke="#75beff"/></svg><span class="ab" style="left:324.50px;font-size:13.30px;letter-spacing:0.139px;">emConnectListener</span><svg class="ab sep" style="left:443.70px" viewBox="0 0 16 16"><path d="M5.700 13.700L5 13l4.600-4.600L5 3.700l.700-.700 5 5v.700z" fill="#a9a9a9"/></svg><svg class="ab sy" style="left:459.10px" viewBox="0 0 16 16"><path d="M4 3.500H2.500v9H4M12 3.500h1.500v9H12" stroke="#75beff" fill="none"/><circle cx="8" cy="8" r="2.300" stroke="#75beff" fill="none"/><path d="M6.300 6.300l3.400 3.400" stroke="#75beff"/></svg><span class="ab" style="left:478.60px;font-size:13.30px;letter-spacing:0.162px;">connectListenFunc</span></div>
 <div class="lens">You, 3天前 | 1 author (You)</div>
 <div class="code">
<div class="ln"><span class="no">1</span><div class="tx"><span class="src"><span class="p">import</span> <span class="b1">{</span> <span class="v">EMClient</span> <span class="b1">}</span> <span class="p">from</span> <span class="s">&#x27;../index&#x27;</span><span class="d">;</span></span></div></div>
<div class="ln"><span class="no">2</span><div class="tx"><span class="src"><span class="p">import</span> <span class="b1">{</span> <span class="v">CONNECT_CALLBACK_TYPE</span><span class="d">,</span> <span class="v">HANDLER_EVENT_NAME</span> <span class="b1">}</span> <span class="p">from</span> <span class="s">&#x27;../constant&#x27;</span><span class="d">;</span></span></div></div>
<div class="ln"><span class="no">3</span><div class="tx"><span class="src"><span class="p">export</span> <span class="k">const</span> <span class="f">emConnectListener</span> <span class="d">=</span> <span class="b1">(</span><span class="v">callback</span><span class="d">,</span> <span class="v">listenerEventName</span><span class="b1">)</span> <span class="k">=&gt;</span> <span class="b1">{</span></span></div></div>
<div class="ln"><span class="no">4</span><div class="tx"><i class="ir" style="width:14.45px;background:#4e1a20"></i><span class="src">  <span class="v">console</span><span class="d">.</span><span class="f">log</span><span class="b2">(</span><span class="s">&#x27;&gt;&gt;&gt;&gt;连接监听已挂载&#x27;</span><span class="b2">)</span><span class="d">;</span></span></div></div>
<div class="ln"><span class="no">5</span><div class="tx"><i class="ir" style="width:14.45px;background:#4e1a20"></i><span class="src">  <span class="k">const</span> <span class="c">connectListenFunc</span> <span class="d">=</span> <span class="b2">{</span></span></div></div>
<div class="ln"><span class="no">6</span><div class="tx"><i class="ir" style="width:28.90px;background:#2a2c1e"></i><span class="src">    <span class="f">onConnected</span><span class="d">:</span> <span class="b3">()</span> <span class="k">=&gt;</span> <span class="b3">{</span></span></div></div>
<div class="ln"><span class="no">7</span><div class="tx"><i class="ir" style="width:43.34px;background:#4e1a20"></i><span class="src">      <span class="v">console</span><span class="d">.</span><span class="f">log</span><span class="b1">(</span><span class="s">&#x27;connected...&#x27;</span><span class="b1">)</span><span class="d">;</span></span></div></div>
<div class="ln"><span class="no">8</span><div class="tx"><i class="ir" style="width:43.34px;background:#4e1a20"></i><span class="src">      <span class="v">callback</span> <span class="d">&amp;&amp;</span> <span class="f">callback</span><span class="b1">(</span><span class="c">CONNECT_CALLBACK_TYPE</span><span class="d">.</span><span class="v">CONNECT_CALLBACK</span><span class="b1">)</span><span class="d">;</span></span></div></div>
<div class="ln"><span class="no">9</span><div class="tx"><i class="ir" style="width:28.90px;background:#2a2c1e"></i><span class="src">    <span class="b3">}</span><span class="d">,</span></span></div></div>
<div class="ln"><span class="no">10</span><div class="tx"><i class="ir" style="width:28.90px;background:#2a2c1e"></i><span class="src">    <span class="f">onDisconnected</span><span class="d">:</span> <span class="b3">()</span> <span class="k">=&gt;</span> <span class="b3">{</span></span></div></div>
<div class="ln"><span class="no">11</span><div class="tx"><i class="ir" style="width:43.34px;background:#4e1a20"></i><span class="src">      <span class="v">callback</span> <span class="d">&amp;&amp;</span> <span class="f">callback</span><span class="b1">(</span><span class="c">CONNECT_CALLBACK_TYPE</span><span class="d">.</span><span class="v">DISCONNECT_CALLBACK</span><span class="b1">)</span><span class="d">;</span></span></div></div>
<div class="ln"><span class="no">12</span><div class="tx"><i class="ir" style="width:43.34px;background:#4e1a20"></i><span class="src">      <span class="v">console</span><span class="d">.</span><span class="f">log</span><span class="b1">(</span><span class="s">&#x27;disconnected...&#x27;</span><span class="b1">)</span><span class="d">;</span></span></div></div>
<div class="ln"><span class="no">13</span><div class="tx"><i class="ir" style="width:28.90px;background:#2a2c1e"></i><span class="src">    <span class="b3">}</span><span class="d">,</span></span></div></div>
<div class="ln"><span class="no cur">14</span><svg class="bulb" viewBox="0 0 16 16"><path d="M8 1.500a4.300 4.300 0 0 0-2.600 7.700c.500.400.800 1 .800 1.600v.700h3.600v-.700c0-.600.300-1.200.800-1.600A4.300 4.300 0 0 0 8 1.500z" fill="#ffcc00"/><rect x="6.200" y="12.200" width="3.600" height="1" fill="#ffcc00"/><rect x="6.700" y="13.700" width="2.600" height="1" fill="#ffcc00"/></svg><div class="tx"><i class="ir" style="width:28.90px;background:#2a2c1e"></i><i class="sl" style="left:22.03px;width:179.52px"></i><span class="src">    <span class="f">onReconnecting</span><span class="d">:</span> <span class="b3">()</span> <span class="k">=&gt;</span> <span class="b3">{</span></span><span class="blame">You, 4周前 • modify:1)App.vue组件内代码改进.2)imApi功能性抽离…</span></div></div>
<div class="ln"><span class="no">15</span><div class="tx"><i class="ir" style="width:43.34px;background:#4e1a20"></i><i class="sl" style="left:0.00px;width:527.35px"></i><span class="ws" style="left:4.33px">····</span><span class="src">      <span class="v">callback</span> <span class="d">&amp;&amp;</span> <span class="f">callback</span><span class="b1">(</span><span class="c">CONNECT_CALLBACK_TYPE</span><span class="d">.</span><span class="v">RECONNECTING_CALLBACK</span><span class="b1">)</span><span class="d">;</span></span></div></div>
<div class="ln"><span class="no">16</span><div class="tx"><i class="ir" style="width:28.90px;background:#2a2c1e"></i><i class="sl" style="left:0.00px;width:43.34px"></i><span class="ws" style="left:18.78px">··</span><span class="src">    <span class="b3">}</span><span class="d">,</span></span></div></div>
<div class="ln"><span class="no">17</span><div class="tx"><i class="ir" style="width:14.45px;background:#4e1a20"></i><span class="src">  <span class="b2">}</span><span class="d">;</span></span></div></div>
<div class="ln"><span class="no">18</span><div class="tx"><i class="ir" style="width:14.45px;background:#4e1a20"></i><span class="src">  <span class="v">EMClient</span><span class="d">.</span><span class="f">removeEventHandler</span><span class="b2">(</span></span></div></div>
<div class="ln"><span class="no">19</span><div class="tx"><i class="ir" style="width:28.90px;background:#2a2c1e"></i><span class="src">    <span class="v">listenerEventName</span> <span class="d">||</span> <span class="c">HANDLER_EVENT_NAME</span><span class="d">.</span><span class="v">CONNECT_EVENT</span></span></div></div>
<div class="ln"><span class="no">20</span><div class="tx"><i class="ir" style="width:14.45px;background:#4e1a20"></i><span class="src">  <span class="b2">)</span><span class="d">;</span></span></div></div>
<div class="ln"><span class="no">21</span><div class="tx"><i class="ir" style="width:14.45px;background:#4e1a20"></i><span class="src">  <span class="v">EMClient</span><span class="d">.</span><span class="f">addEventHandler</span><span class="b2">(</span></span></div></div>
<div class="ln"><span class="no">22</span><div class="tx"><i class="ir" style="width:28.90px;background:#2a2c1e"></i><span class="src">    <span class="v">listenerEventName</span> <span class="d">||</span> <span class="c">HANDLER_EVENT_NAME</span><span class="d">.</span><span class="v">CONNECT_EVENT</span><span class="d">,</span></span></div></div>
<div class="ln"><span class="no">23</span><div class="tx"><i class="ir" style="width:28.90px;background:#2a2c1e"></i><span class="src">    <span class="c">connectListenFunc</span></span></div></div>
<div class="ln"><span class="no">24</span><div class="tx"><i class="ir" style="width:14.45px;background:#4e1a20"></i><span class="src">  <span class="b2">)</span><span class="d">;</span></span></div></div>
<div class="ln"><span class="no">25</span><div class="tx"><span class="src"><span class="b1">}</span><span class="d">;</span></span></div></div>
<div class="ln"><span class="no">26</span><div class="tx"><span class="src"></span></div></div>
  <i class="bg-h" style="left:81px;top:89.500px;width:186px"></i>
  <i class="bg-v" style="left:81px;top:90px;height:198px"></i>
 </div>
 <svg class="mini" viewBox="0 0 89.3 70"><rect x="0" y="31.500" width="89.300" height="4.800" fill="#183868"/><rect x="0.0" y="0.0" width="7.1" height="1.4" fill="#c586c0" opacity="0.34"/><rect x="8.3" y="0.0" width="1.2" height="1.4" fill="#ffd700" opacity="0.34"/><rect x="10.7" y="0.0" width="9.5" height="1.4" fill="#9cdcfe" opacity="0.34"/><rect x="21.4" y="0.0" width="1.2" height="1.4" fill="#ffd700" opacity="0.34"/><rect x="23.8" y="0.0" width="4.8" height="1.4" fill="#c586c0" opacity="0.34"/><rect x="29.8" y="0.0" width="11.9" height="1.4" fill="#ce9178" opacity="0.34"/><rect x="41.6" y="0.0" width="1.2" height="1.4" fill="#aaaaaa" opacity="0.34"/><rect x="0.0" y="2.4" width="7.1" height="1.4" fill="#c586c0" opacity="0.34"/><rect x="8.3" y="2.4" width="1.2" height="1.4" fill="#ffd700" opacity="0.34"/><rect x="10.7" y="2.4" width="25.0" height="1.4" fill="#9cdcfe" opacity="0.34"/><rect x="35.7" y="2.4" width="1.2" height="1.4" fill="#aaaaaa" opacity="0.34"/><rect x="38.1" y="2.4" width="21.4" height="1.4" fill="#9cdcfe" opacity="0.34"/><rect x="60.7" y="2.4" width="1.2" height="1.4" fill="#ffd700" opacity="0.34"/><rect x="63.1" y="2.4" width="4.8" height="1.4" fill="#c586c0" opacity="0.34"/><rect x="69.0" y="2.4" width="15.5" height="1.4" fill="#ce9178" opacity="0.34"/><rect x="84.5" y="2.4" width="1.2" height="1.4" fill="#aaaaaa" opacity="0.34"/><rect x="0.0" y="4.7" width="7.1" height="1.4" fill="#c586c0" opacity="0.34"/><rect x="8.3" y="4.7" width="5.9" height="1.4" fill="#569cd6" opacity="0.34"/><rect x="15.5" y="4.7" width="20.2" height="1.4" fill="#dcdcaa" opacity="0.34"/><rect x="36.9" y="4.7" width="1.2" height="1.4" fill="#aaaaaa" opacity="0.34"/><rect x="39.3" y="4.7" width="1.2" height="1.4" fill="#ffd700" opacity="0.34"/><rect x="40.5" y="4.7" width="9.5" height="1.4" fill="#9cdcfe" opacity="0.34"/><rect x="50.0" y="4.7" width="1.2" height="1.4" fill="#aaaaaa" opacity="0.34"/><rect x="52.4" y="4.7" width="20.2" height="1.4" fill="#9cdcfe" opacity="0.34"/><rect x="72.6" y="4.7" width="1.2" height="1.4" fill="#ffd700" opacity="0.34"/><rect x="75.0" y="4.7" width="2.4" height="1.4" fill="#569cd6" opacity="0.34"/><rect x="78.5" y="4.7" width="1.2" height="1.4" fill="#ffd700" opacity="0.34"/><rect x="2.4" y="7.1" width="8.3" height="1.4" fill="#9cdcfe" opacity="0.34"/><rect x="10.7" y="7.1" width="1.2" height="1.4" fill="#aaaaaa" opacity="0.34"/><rect x="11.9" y="7.1" width="3.6" height="1.4" fill="#dcdcaa" opacity="0.34"/><rect x="15.5" y="7.1" width="1.2" height="1.4" fill="#da70d6" opacity="0.34"/><rect x="16.7" y="7.1" width="15.5" height="1.4" fill="#ce9178" opacity="0.34"/><rect x="32.1" y="7.1" width="1.2" height="1.4" fill="#da70d6" opacity="0.34"/><rect x="33.3" y="7.1" width="1.2" height="1.4" fill="#aaaaaa" opacity="0.34"/><rect x="2.4" y="9.5" width="5.9" height="1.4" fill="#569cd6" opacity="0.34"/><rect x="9.5" y="9.5" width="20.2" height="1.4" fill="#4fc1ff" opacity="0.34"/><rect x="30.9" y="9.5" width="1.2" height="1.4" fill="#aaaaaa" opacity="0.34"/><rect x="33.3" y="9.5" width="1.2" height="1.4" fill="#da70d6" opacity="0.34"/><rect x="4.8" y="11.9" width="13.1" height="1.4" fill="#dcdcaa" opacity="0.34"/><rect x="17.8" y="11.9" width="1.2" height="1.4" fill="#aaaaaa" opacity="0.34"/><rect x="20.2" y="11.9" width="2.4" height="1.4" fill="#179fff" opacity="0.34"/><rect x="23.8" y="11.9" width="2.4" height="1.4" fill="#569cd6" opacity="0.34"/><rect x="27.4" y="11.9" width="1.2" height="1.4" fill="#179fff" opacity="0.34"/><rect x="7.1" y="14.2" width="8.3" height="1.4" fill="#9cdcfe" opacity="0.34"/><rect x="15.5" y="14.2" width="1.2" height="1.4" fill="#aaaaaa" opacity="0.34"/><rect x="16.7" y="14.2" width="3.6" height="1.4" fill="#dcdcaa" opacity="0.34"/><rect x="20.2" y="14.2" width="1.2" height="1.4" fill="#ffd700" opacity="0.34"/><rect x="21.4" y="14.2" width="16.7" height="1.4" fill="#ce9178" opacity="0.34"/><rect x="38.1" y="14.2" width="1.2" height="1.4" fill="#ffd700" opacity="0.34"/><rect x="39.3" y="14.2" width="1.2" height="1.4" fill="#aaaaaa" opacity="0.34"/><rect x="7.1" y="16.6" width="9.5" height="1.4" fill="#9cdcfe" opacity="0.34"/><rect x="17.8" y="16.6" width="2.4" height="1.4" fill="#aaaaaa" opacity="0.34"/><rect x="21.4" y="16.6" width="9.5" height="1.4" fill="#dcdcaa" opacity="0.34"/><rect x="30.9" y="16.6" width="1.2" height="1.4" fill="#ffd700" opacity="0.34"/><rect x="32.1" y="16.6" width="25.0" height="1.4" fill="#4fc1ff" opacity="0.34"/><rect x="57.1" y="16.6" width="1.2" height="1.4" fill="#aaaaaa" opacity="0.34"/><rect x="58.3" y="16.6" width="19.0" height="1.4" fill="#9cdcfe" opacity="0.34"/><rect x="77.3" y="16.6" width="1.2" height="1.4" fill="#ffd700" opacity="0.34"/><rect x="78.5" y="16.6" width="1.2" height="1.4" fill="#aaaaaa" opacity="0.34"/><rect x="4.8" y="19.0" width="1.2" height="1.4" fill="#179fff" opacity="0.34"/><rect x="5.9" y="19.0" width="1.2" height="1.4" fill="#aaaaaa" opacity="0.34"/><rect x="4.8" y="21.3" width="16.7" height="1.4" fill="#dcdcaa" opacity="0.34"/><rect x="21.4" y="21.3" width="1.2" height="1.4" fill="#aaaaaa" opacity="0.34"/><rect x="23.8" y="21.3" width="2.4" height="1.4" fill="#179fff" opacity="0.34"/><rect x="27.4" y="21.3" width="2.4" height="1.4" fill="#569cd6" opacity="0.34"/><rect x="30.9" y="21.3" width="1.2" height="1.4" fill="#179fff" opacity="0.34"/><rect x="7.1" y="23.7" width="9.5" height="1.4" fill="#9cdcfe" opacity="0.34"/><rect x="17.8" y="23.7" width="2.4" height="1.4" fill="#aaaaaa" opacity="0.34"/><rect x="21.4" y="23.7" width="9.5" height="1.4" fill="#dcdcaa" opacity="0.34"/><rect x="30.9" y="23.7" width="1.2" height="1.4" fill="#ffd700" opacity="0.34"/><rect x="32.1" y="23.7" width="25.0" height="1.4" fill="#4fc1ff" opacity="0.34"/><rect x="57.1" y="23.7" width="1.2" height="1.4" fill="#aaaaaa" opacity="0.34"/><rect x="58.3" y="23.7" width="22.6" height="1.4" fill="#9cdcfe" opacity="0.34"/><rect x="80.9" y="23.7" width="1.2" height="1.4" fill="#ffd700" opacity="0.34"/><rect x="82.1" y="23.7" width="1.2" height="1.4" fill="#aaaaaa" opacity="0.34"/><rect x="7.1" y="26.1" width="8.3" height="1.4" fill="#9cdcfe" opacity="0.34"/><rect x="15.5" y="26.1" width="1.2" height="1.4" fill="#aaaaaa" opacity="0.34"/><rect x="16.7" y="26.1" width="3.6" height="1.4" fill="#dcdcaa" opacity="0.34"/><rect x="20.2" y="26.1" width="1.2" height="1.4" fill="#ffd700" opacity="0.34"/><rect x="21.4" y="26.1" width="20.2" height="1.4" fill="#ce9178" opacity="0.34"/><rect x="41.6" y="26.1" width="1.2" height="1.4" fill="#ffd700" opacity="0.34"/><rect x="42.8" y="26.1" width="1.2" height="1.4" fill="#aaaaaa" opacity="0.34"/><rect x="4.8" y="28.4" width="1.2" height="1.4" fill="#179fff" opacity="0.34"/><rect x="5.9" y="28.4" width="1.2" height="1.4" fill="#aaaaaa" opacity="0.34"/><rect x="4.8" y="30.8" width="16.7" height="1.4" fill="#dcdcaa" opacity="0.34"/><rect x="21.4" y="30.8" width="1.2" height="1.4" fill="#aaaaaa" opacity="0.34"/><rect x="23.8" y="30.8" width="2.4" height="1.4" fill="#179fff" opacity="0.34"/><rect x="27.4" y="30.8" width="2.4" height="1.4" fill="#569cd6" opacity="0.34"/><rect x="30.9" y="30.8" width="1.2" height="1.4" fill="#179fff" opacity="0.34"/><rect x="7.1" y="33.2" width="9.5" height="1.4" fill="#9cdcfe" opacity="0.34"/><rect x="17.8" y="33.2" width="2.4" height="1.4" fill="#aaaaaa" opacity="0.34"/><rect x="21.4" y="33.2" width="9.5" height="1.4" fill="#dcdcaa" opacity="0.34"/><rect x="30.9" y="33.2" width="1.2" height="1.4" fill="#ffd700" opacity="0.34"/><rect x="32.1" y="33.2" width="25.0" height="1.4" fill="#4fc1ff" opacity="0.34"/><rect x="57.1" y="33.2" width="1.2" height="1.4" fill="#aaaaaa" opacity="0.34"/><rect x="58.3" y="33.2" width="25.0" height="1.4" fill="#9cdcfe" opacity="0.34"/><rect x="83.3" y="33.2" width="1.2" height="1.4" fill="#ffd700" opacity="0.34"/><rect x="84.5" y="33.2" width="1.2" height="1.4" fill="#aaaaaa" opacity="0.34"/><rect x="4.8" y="35.6" width="1.2" height="1.4" fill="#179fff" opacity="0.34"/><rect x="5.9" y="35.6" width="1.2" height="1.4" fill="#aaaaaa" opacity="0.34"/><rect x="2.4" y="37.9" width="1.2" height="1.4" fill="#da70d6" opacity="0.34"/><rect x="3.6" y="37.9" width="1.2" height="1.4" fill="#aaaaaa" opacity="0.34"/><rect x="2.4" y="40.3" width="9.5" height="1.4" fill="#9cdcfe" opacity="0.34"/><rect x="11.9" y="40.3" width="1.2" height="1.4" fill="#aaaaaa" opacity="0.34"/><rect x="13.1" y="40.3" width="21.4" height="1.4" fill="#dcdcaa" opacity="0.34"/><rect x="34.5" y="40.3" width="1.2" height="1.4" fill="#da70d6" opacity="0.34"/><rect x="4.8" y="42.7" width="20.2" height="1.4" fill="#9cdcfe" opacity="0.34"/><rect x="26.2" y="42.7" width="2.4" height="1.4" fill="#aaaaaa" opacity="0.34"/><rect x="29.8" y="42.7" width="21.4" height="1.4" fill="#4fc1ff" opacity="0.34"/><rect x="51.2" y="42.7" width="1.2" height="1.4" fill="#aaaaaa" opacity="0.34"/><rect x="52.4" y="42.7" width="15.5" height="1.4" fill="#9cdcfe" opacity="0.34"/><rect x="2.4" y="45.0" width="1.2" height="1.4" fill="#da70d6" opacity="0.34"/><rect x="3.6" y="45.0" width="1.2" height="1.4" fill="#aaaaaa" opacity="0.34"/><rect x="2.4" y="47.4" width="9.5" height="1.4" fill="#9cdcfe" opacity="0.34"/><rect x="11.9" y="47.4" width="1.2" height="1.4" fill="#aaaaaa" opacity="0.34"/><rect x="13.1" y="47.4" width="17.8" height="1.4" fill="#dcdcaa" opacity="0.34"/><rect x="30.9" y="47.4" width="1.2" height="1.4" fill="#da70d6" opacity="0.34"/><rect x="4.8" y="49.8" width="20.2" height="1.4" fill="#9cdcfe" opacity="0.34"/><rect x="26.2" y="49.8" width="2.4" height="1.4" fill="#aaaaaa" opacity="0.34"/><rect x="29.8" y="49.8" width="21.4" height="1.4" fill="#4fc1ff" opacity="0.34"/><rect x="51.2" y="49.8" width="1.2" height="1.4" fill="#aaaaaa" opacity="0.34"/><rect x="52.4" y="49.8" width="15.5" height="1.4" fill="#9cdcfe" opacity="0.34"/><rect x="67.8" y="49.8" width="1.2" height="1.4" fill="#aaaaaa" opacity="0.34"/><rect x="4.8" y="52.1" width="20.2" height="1.4" fill="#4fc1ff" opacity="0.34"/><rect x="2.4" y="54.5" width="1.2" height="1.4" fill="#da70d6" opacity="0.34"/><rect x="3.6" y="54.5" width="1.2" height="1.4" fill="#aaaaaa" opacity="0.34"/><rect x="0.0" y="56.9" width="1.2" height="1.4" fill="#ffd700" opacity="0.34"/><rect x="1.2" y="56.9" width="1.2" height="1.4" fill="#aaaaaa" opacity="0.34"/></svg>
</div>

<div class="panel">
 <div class="ptabs"><span>问题</span><span>输出</span><span class="on">终端</span><span>GITLENS</span></div>
 <div class="phead"><svg class="tw" viewBox="0 0 16 16"><path d="M7.976 10.072l4.357-4.357.62.618L8.284 11h-.618L3 6.333l.619-.618z" fill="#c5c5c5"/></svg>终端</div>
 <div class="term"><div><i></i>hfp@bogon webim-uniapp-vue3-demo % </div><div><i></i>hfp@bogon webim-uniapp-vue3-demo % </div><div><i></i>hfp@bogon webim-uniapp-vue3-demo % <span class="cursor"></span></div></div>
</div>
<div class="wm">@稀土掘金技术社区</div>
</div>
</body>
</html>
